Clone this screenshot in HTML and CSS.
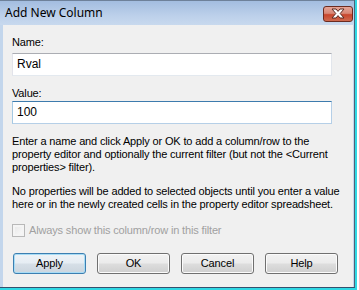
FILE: index.html
```html
<!DOCTYPE html>
<html>
<head>
<meta charset="utf-8">
<link rel="stylesheet" href="styles.css">
</head>
<body>
<div class="outer">
  <div class="window">
    <div class="titlebar">
      <span class="title">Add New Column</span>
      <div class="close">
        <svg width="18" height="11" viewBox="0 0 18 11">
          <path d="M3 1 L7 1 L9 3.4 L11 1 L15 1 L11.2 5.5 L15 10 L11 10 L9 7.6 L7 10 L3 10 L6.8 5.5 Z" fill="#fff" stroke="#5a2a22" stroke-width="1" stroke-linejoin="round"/>
        </svg>
      </div>
    </div>
    <div class="client">
      <div class="label label-name">Name:</div>
      <div class="field">Rval</div>
      <div class="label label-value">Value:</div>
      <div class="field focused">100</div>
      <p class="para para1">Enter a name and click Apply or OK to add a column/row to the property editor and optionally the current filter (but not the &lt;Current properties&gt; filter).</p>
      <p class="para para2">No properties will be added to selected objects until you enter a value here or in the newly created cells in the property editor spreadsheet.</p>
      <div class="check-row">
        <span class="checkbox"></span>
        <span class="check-label">Always show this column/row in this filter</span>
      </div>
      <div class="buttons">
        <div class="btn default">Apply</div>
        <div class="btn">OK</div>
        <div class="btn">Cancel</div>
        <div class="btn">Help</div>
      </div>
    </div>
  </div>
</div>
</body>
</html>
```

FILE: styles.css
```css
html, body {
  margin: 0;
  padding: 0;
  background: #ffffff;
  width: 359px;
  height: 290px;
  overflow: hidden;
}

.outer {
  width: 355px;
  height: 288px;
  border-right: 2px solid #2fd8e4;
  border-bottom: 2px solid #2fd8e4;
}

.window {
  width: 354px;
  height: 287px;
  border-right: 1px solid #4f6277;
  border-bottom: 1px solid #35506e;
  background: #c3d6ec;
  display: flex;
  flex-direction: column;
  font-family: "Liberation Sans", Arial, sans-serif;
  font-size: 11px;
  line-height: 13px;
  letter-spacing: -0.15px;
  color: #000;
}

.titlebar {
  height: 25px;
  flex: none;
  background: linear-gradient(#a3bde0, #bcd0ea 60%, #c8d9ee);
  border-top: 1px solid #6e819a;
  box-sizing: border-box;
  display: flex;
  align-items: center;
  justify-content: space-between;
  padding: 0 1px 1px 5px;
}

.title {
  font-family: "Noto Sans", "Open Sans", sans-serif;
  font-size: 12px;
  color: #000;
  letter-spacing: 0;
}

.close {
  width: 30px;
  height: 16px;
  box-sizing: border-box;
  border: 1px solid #6b2b20;
  border-radius: 3px;
  background: linear-gradient(#e5a497, #d88775 45%, #c8452c 55%, #cf6a4f);
  display: flex;
  align-items: center;
  justify-content: center;
  margin-top: 2px;
}

.client {
  flex: 1;
  margin: 0 1px 0 3px;
  background: #f0f0f0;
  padding: 11px 0 0 9px;
  display: flex;
  flex-direction: column;
  align-items: flex-start;
}

.label {
  height: 13px;
}

.label-name {
  margin-bottom: 4px;
}

.label-value {
  margin-top: 11px;
  margin-bottom: 1px;
}

.field {
  width: 320px;
  height: 23px;
  box-sizing: border-box;
  background: #fff;
  border: 1px solid #e2e6ec;
  border-top-color: #abadb3;
  border-left-color: #e2e3ea;
  border-bottom-color: #e3e9ef;
  padding: 4px 0 0 4px;
  font-size: 12px;
  letter-spacing: 0;
}

.field.focused {
  border-color: #b5cfe7;
  border-top-color: #3d7bad;
  border-left-color: #a4c9e3;
}

.para {
  margin: 11px 0 0 0;
  width: 334px;
}

.para2 {
  margin-top: 11px;
}

.check-row {
  margin-top: 13px;
  display: flex;
  align-items: center;
  height: 13px;
}

.checkbox {
  width: 13px;
  height: 13px;
  box-sizing: border-box;
  border: 1px solid #b8b8b8;
  background: linear-gradient(135deg, #e6e6e6, #fbfbfb);
  box-shadow: inset 0 0 0 2px #f4f4f4;
}

.check-label {
  margin-left: 4px;
  color: #a0a0a0;
}

.buttons {
  margin-top: 16px;
  margin-left: 1px;
  display: flex;
  gap: 11px;
}

.btn {
  width: 73px;
  height: 21px;
  box-sizing: border-box;
  border: 1px solid #707070;
  border-radius: 3px;
  background: linear-gradient(#f2f2f2, #ebebeb 48%, #dddddd 52%, #cfcfcf);
  box-shadow: inset 0 0 0 1px #fbfbfb;
  display: flex;
  align-items: center;
  justify-content: center;
  font-size: 11px;
}

.btn.default {
  border-color: #3c7fb1;
  box-shadow: inset 0 0 0 1px #a8dcf5;
  background: linear-gradient(#eef3f7, #e6edf3 48%, #d6dfe7 52%, #cbd5de);
}
```
